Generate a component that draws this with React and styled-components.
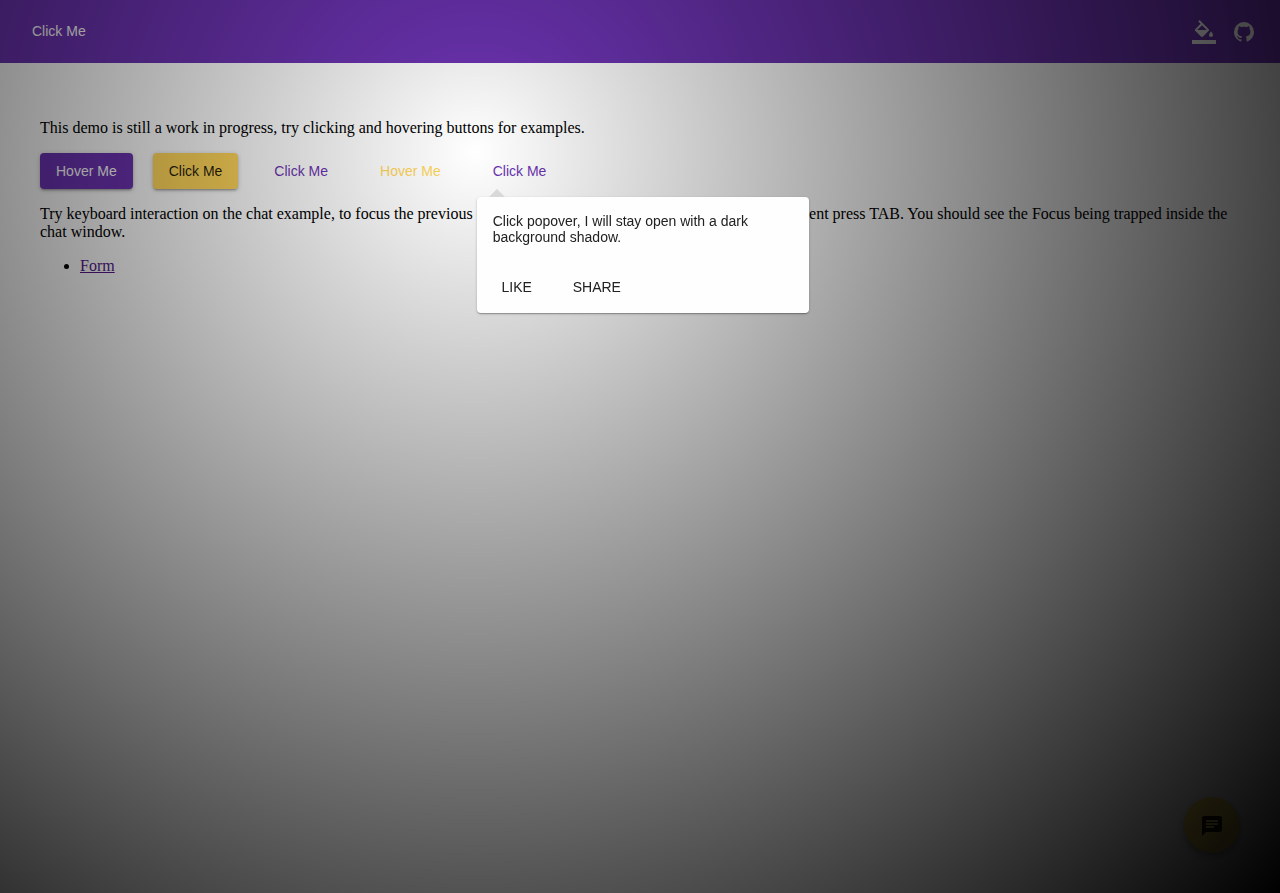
import React from "react";
import styled, { createGlobalStyle } from "styled-components";
import { MdChat } from "react-icons/md";

const GlobalStyle = createGlobalStyle`
  * { box-sizing: border-box; }
  body {
    margin: 0;
    background: #fff;
    color: #000;
    font: 16px/18px "Liberation Serif", serif;
  }
`;

const sans = `"Liberation Sans", Arial, sans-serif`;

const tones = {
  primary: { fill: "#6d34b3", ink: "#fff" },
  accent: { fill: "#ffd65a", ink: "rgba(0, 0, 0, 0.87)" },
};

const Page = styled.div`
  min-height: 100vh;
`;

const Header = styled.header`
  display: flex;
  align-items: center;
  justify-content: space-between;
  height: 63px;
  padding: 0 24px 0 16px;
  background: ${tones.primary.fill};
`;

const IconBar = styled.nav`
  display: flex;
  align-items: center;
  gap: 16px;
`;

const iconReset = `
  display: flex;
  padding: 0;
  border: 0;
  background: none;
  color: #fff;
  cursor: pointer;
`;

const IconButton = styled.button`${iconReset}`;
const IconLink = styled.a`${iconReset}`;

const BaseButton = styled.button`
  height: 36px;
  padding: 0 16px;
  border: 0;
  border-radius: 4px;
  font: 14px/16px ${sans};
  cursor: pointer;
`;

const RaisedButton = styled(BaseButton)`
  background: ${(p) => tones[p.$tone].fill};
  color: ${(p) => tones[p.$tone].ink};
  box-shadow: 0 1px 5px rgba(0, 0, 0, 0.2), 0 2px 2px rgba(0, 0, 0, 0.14),
    0 3px 1px -2px rgba(0, 0, 0, 0.12);
`;

const FlatButton = styled(BaseButton)`
  background: transparent;
  color: ${(p) => tones[p.$tone].fill};
`;

const HeaderButton = styled(BaseButton)`
  height: 64px;
  padding-bottom: 2px;
  background: transparent;
  color: #fff;
`;

const Main = styled.main`
  padding: 56px 40px 0;
`;

const Paragraph = styled.p`
  margin: 0 0 16px;
`;

const ButtonRow = styled.div`
  display: flex;
  gap: 20px;
  margin-bottom: 16px;
`;

const List = styled.ul`
  margin: 0;
  padding-left: 40px;
`;

const VisitedLink = styled.a`
  color: #551a8b;
`;

const ChatButton = styled.button`
  position: fixed;
  right: 40px;
  bottom: 40px;
  display: grid;
  place-items: center;
  width: 56px;
  height: 56px;
  padding: 2px 0 0;
  border: 0;
  border-radius: 50%;
  background: ${tones.accent.fill};
  color: ${tones.accent.ink};
  box-shadow: 0 3px 5px -1px rgba(0, 0, 0, 0.2), 0 6px 10px rgba(0, 0, 0, 0.14),
    0 1px 18px rgba(0, 0, 0, 0.12);
`;

const Backdrop = styled.div`
  position: fixed;
  inset: 0;
  background: radial-gradient(
    circle farthest-corner at 475px 152px,
    rgba(0, 0, 0, 0),
    rgba(0, 0, 0, 1)
  );
`;

const PopoverAnchor = styled.div`
  position: relative;
`;

const Popover = styled.section`
  position: absolute;
  z-index: 2;
  top: 44px;
  left: 0;
  width: 332px;
  padding: 16px 16px 8px;
  border-radius: 4px;
  background: #fefefe;
  color: #212121;
  font: 14px/16px ${sans};
  box-shadow: 0 1px 3px rgba(0, 0, 0, 0.2), 0 1px 1px rgba(0, 0, 0, 0.14),
    0 2px 1px -1px rgba(0, 0, 0, 0.12);

  &::before {
    content: "";
    position: absolute;
    top: -8px;
    left: 12px;
    border: solid transparent;
    border-width: 0 8px 8px;
    border-bottom-color: #d8d8d8;
  }
`;

const PopoverText = styled.p`
  margin: 0 0 24px;
`;

const PopoverActions = styled.div`
  display: flex;
  gap: 8px;
  margin-left: -8px;
`;

const ActionButton = styled(BaseButton)`
  min-width: 64px;
  background: transparent;
  color: #212121;
  text-transform: uppercase;
`;

function FillIcon() {
  return (
    <svg width="24" height="24" viewBox="0 0 24 24" fill="currentColor" aria-hidden="true">
      <path d="M16.56 8.94L7.62 0 6.21 1.41l2.38 2.38-5.15 5.15c-.59.59-.59 1.54 0 2.12l5.5 5.5c.29.29.68.44 1.06.44s.77-.15 1.06-.44l5.5-5.5c.59-.58.59-1.53 0-2.12zM5.21 10L10 5.21 14.79 10H5.21zM19 11.5s-2 2.17-2 3.5c0 1.1.9 2 2 2s2-.9 2-2c0-1.33-2-3.5-2-3.5z" />
      <path d="M0 20h24v4H0z" />
    </svg>
  );
}

function GithubMark() {
  return (
    <svg width="24" height="24" viewBox="0 0 24 24" fill="currentColor" aria-hidden="true">
      <path d="M12 2A10 10 0 0 0 2 12c0 4.42 2.87 8.17 6.84 9.5.5.08.66-.23.66-.5v-1.69c-2.77.6-3.36-1.34-3.36-1.34-.46-1.16-1.11-1.47-1.11-1.47-.91-.62.07-.6.07-.6 1 .07 1.53 1.03 1.53 1.03.87 1.52 2.34 1.07 2.91.83.09-.65.35-1.09.63-1.34-2.22-.25-4.55-1.11-4.55-4.92 0-1.11.38-2 1.03-2.71-.1-.25-.45-1.29.1-2.64 0 0 .84-.27 2.75 1.02.79-.22 1.65-.33 2.5-.33s1.71.11 2.5.33c1.91-1.29 2.75-1.02 2.75-1.02.55 1.35.2 2.39.1 2.64.65.71 1.03 1.6 1.03 2.71 0 3.82-2.34 4.66-4.57 4.91.36.31.69.92.69 1.85V21c0 .27.16.59.67.5C19.14 20.16 22 16.42 22 12A10 10 0 0 0 12 2z" />
    </svg>
  );
}

export default function App() {
  return (
    <Page>
      <GlobalStyle />
      <Header>
        <HeaderButton type="button">Click Me</HeaderButton>
        <IconBar aria-label="Tools">
          <IconButton type="button" aria-label="Change theme">
            <FillIcon />
          </IconButton>
          <IconLink href="#github" aria-label="GitHub">
            <GithubMark />
          </IconLink>
        </IconBar>
      </Header>
      <Main>
        <Paragraph>
          This demo is still a work in progress, try clicking and hovering buttons for examples.
        </Paragraph>
        <ButtonRow>
          <RaisedButton type="button" $tone="primary">Hover Me</RaisedButton>
          <RaisedButton type="button" $tone="accent">Click Me</RaisedButton>
          <FlatButton type="button" $tone="primary">Click Me</FlatButton>
          <FlatButton type="button" $tone="accent">Hover Me</FlatButton>
          <PopoverAnchor>
            <FlatButton type="button" $tone="primary" aria-expanded="true">Click Me</FlatButton>
            <Popover role="dialog" aria-label="Click popover">
              <PopoverText>
                Click popover, I will stay open with a dark background shadow.
              </PopoverText>
              <PopoverActions>
                <ActionButton type="button">Like</ActionButton>
                <ActionButton type="button">Share</ActionButton>
              </PopoverActions>
            </Popover>
          </PopoverAnchor>
        </ButtonRow>
        <Paragraph>
          Try keyboard interaction on the chat example, to focus the previous element press
          SHIFT + TAB, to focus the next element press TAB. You should see the Focus being trapped
          inside the chat window.
        </Paragraph>
        <List>
          <li>
            <VisitedLink href="#form">Form</VisitedLink>
          </li>
        </List>
      </Main>
      <ChatButton type="button" aria-label="Open chat">
        <MdChat size={24} />
      </ChatButton>
      <Backdrop />
    </Page>
  );
}
